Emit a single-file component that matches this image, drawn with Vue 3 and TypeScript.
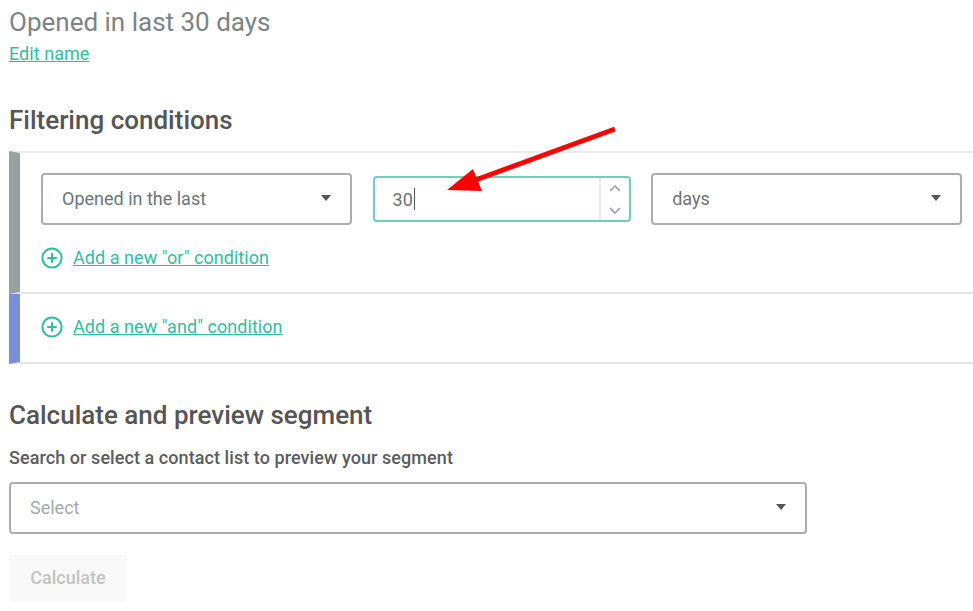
<script setup lang="ts">
const unit = 'days'
</script>

<template>
  <div class="page">
    <h1 class="title">Opened in last 30 days</h1>
    <a class="edit link">Edit name</a>
    <h2 class="heading filter-heading">Filtering conditions</h2>

    <section class="conditions">
      <div class="group or-group">
        <div class="row">
          <div class="select wide">
            <span>Opened in the last</span>
            <i class="caret"></i>
          </div>
          <div class="number">
            <span class="value">30</span>
            <span class="cursor"></span>
            <div class="stepper">
              <button class="step">
                <svg width="12" height="7" viewBox="0 0 12 7"><path d="M1 6l5-5 5 5" /></svg>
              </button>
              <button class="step">
                <svg width="12" height="7" viewBox="0 0 12 7"><path d="M1 1l5 5 5-5" /></svg>
              </button>
            </div>
          </div>
          <div class="select wide">
            <span>{{ unit }}</span>
            <i class="caret"></i>
          </div>
        </div>
        <div class="add add-or">
          <svg class="plus" width="22" height="22" viewBox="0 0 22 22">
            <circle cx="11" cy="11" r="9.6" />
            <path d="M11 6.2v9.6M6.2 11h9.6" />
          </svg>
          <a class="link">Add a new "or" condition</a>
        </div>
      </div>
      <div class="group and-group">
        <div class="add">
          <svg class="plus" width="22" height="22" viewBox="0 0 22 22">
            <circle cx="11" cy="11" r="9.6" />
            <path d="M11 6.2v9.6M6.2 11h9.6" />
          </svg>
          <a class="link">Add a new "and" condition</a>
        </div>
      </div>
    </section>

    <h2 class="heading preview-heading">Calculate and preview segment</h2>
    <label class="label">Search or select a contact list to preview your segment</label>
    <div class="select list">
      <span class="placeholder">Select</span>
      <i class="caret"></i>
    </div>
    <button class="calc">Calculate</button>

    <svg class="arrow" width="973" height="611" viewBox="0 0 973 611">
      <path class="shaft" d="M615 129L470 182" />
      <path class="head" d="M447 190L473 169L482 191Z" />
    </svg>
  </div>
</template>

<style scoped>
.page {
  position: relative;
  width: 973px;
  height: 611px;
  overflow: hidden;
  background: #fff;
  font-family: Roboto, "Liberation Sans", sans-serif;
  color: #666;
  padding-left: 9px;
  box-sizing: border-box;
}
.title {
  margin: 0;
  padding-top: 8px;
  font-size: 26px;
  line-height: 28px;
  font-weight: 400;
  color: #7c8484;
}
.link {
  color: #2ebf9f;
  text-decoration: underline;
  font-size: 18px;
  line-height: 22px;
  letter-spacing: 0.05px;
}
.edit {
  display: block;
  width: max-content;
  margin-top: 7px;
}
.heading {
  margin: 0;
  font-size: 26px;
  line-height: 28px;
  font-weight: 500;
  color: #555;
}
.filter-heading {
  margin-top: 41px;
}
.conditions {
  margin-top: 17px;
  display: flex;
  flex-direction: column;
}
.group {
  border-left: 11px solid #94a3a1;
}
.or-group {
  height: 143px;
  box-sizing: border-box;
  border-top: 2px solid #ebebeb;
  border-bottom: 2px solid #e6e6e6;
  padding: 20px 0 0 21px;
}
.and-group {
  height: 70px;
  box-sizing: border-box;
  border-left-color: #7990d4;
  border-bottom: 2px solid #e6e6e6;
  padding-top: 22px;
  padding-left: 21px;
}
.row {
  display: flex;
  align-items: center;
  gap: 20.6px;
}
.select {
  display: flex;
  align-items: center;
  justify-content: space-between;
  box-sizing: border-box;
  height: 52px;
  border: 2px solid #adadad;
  border-radius: 4px;
  padding: 0 19px 2px;
  font-size: 18px;
  color: #6d7478;
}
.wide {
  width: 311px;
}
.list {
  width: 798px;
  margin-top: 13px;
}
.placeholder {
  color: #a8a8a8;
}
.caret {
  width: 0;
  height: 0;
  border-left: 5.5px solid transparent;
  border-right: 5.5px solid transparent;
  border-top: 6.5px solid #555;
}
.number {
  display: flex;
  align-items: center;
  box-sizing: border-box;
  width: 258px;
  height: 46px;
  border: 2px solid #6fcfba;
  border-radius: 4px;
  padding-left: 18px;
  font-size: 18px;
  color: #6d7478;
}
.cursor {
  width: 1.5px;
  height: 22px;
  margin-left: 1px;
  background: #555;
}
.stepper {
  display: flex;
  flex-direction: column;
  justify-content: space-between;
  box-sizing: border-box;
  padding: 7px 0 6px;
  margin-left: auto;
  width: 29.5px;
  height: 100%;
  border-left: 2px solid #ececec;
}
.step {
  display: flex;
  align-items: center;
  justify-content: center;
  padding: 0;
  border: 0;
  background: none;
}
.step svg path {
  fill: none;
  stroke: #9a9a9a;
  stroke-width: 1.5;
}
.add {
  display: flex;
  align-items: center;
  gap: 10px;
}
.add-or {
  margin-top: 22px;
}
.plus circle,
.plus path {
  fill: none;
  stroke: #2ebf9f;
  stroke-width: 2;
}
.preview-heading {
  margin-top: 37px;
}
.label {
  display: block;
  margin-top: 18px;
  font-size: 18px;
  line-height: 22px;
  font-weight: 500;
  letter-spacing: 0.07px;
  color: #5c5c5c;
}
.calc {
  display: block;
  margin-top: 21px;
  width: 118px;
  height: 47px;
  padding: 0 0 2px;
  border: 0;
  border-radius: 3px;
  background: #f9f9f9;
  color: #c4c4c4;
  font: 500 18px Roboto, "Liberation Sans", sans-serif;
}
.arrow {
  position: absolute;
  left: 0;
  top: 0;
  pointer-events: none;
}
.shaft {
  fill: none;
  stroke: #ff0000;
  stroke-width: 5;
}
.head {
  fill: #ff0000;
}
</style>
